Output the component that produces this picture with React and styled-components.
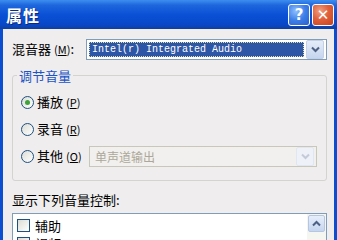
import React from "react";
import styled, { createGlobalStyle } from "styled-components";

const GlobalStyle = createGlobalStyle`
  html, body {
    margin: 0;
    padding: 0;
    background: #ecebeb;
    overflow: hidden;
  }
  body {
    font-family: "Noto Sans CJK SC", "DejaVu Sans", sans-serif;
  }
`;

const Window = styled.div`
  width: 337px;
  height: 240px;
  display: flex;
  flex-direction: column;
  background: #0b4fd0;
  overflow: hidden;
`;

const TitleBar = styled.div`
  height: 29px;
  flex: none;
  display: flex;
  align-items: center;
  padding: 0 3px 0 6px;
  background: linear-gradient(180deg, #3d8ef0 0%, #1e66dc 18%, #0a51d6 50%, #0848c8 85%, #0f3f9e 100%);
`;

const Title = styled.div`
  flex: 1;
  color: #fff;
  font-size: 16px;
  font-weight: bold;
  letter-spacing: 1px;
  text-shadow: 1px 1px 0 #0a2a7a;
`;

const CapButton = styled.div`
  width: 20px;
  height: 20px;
  margin-left: 2px;
  border: 1px solid #fff;
  border-radius: 3px;
  display: flex;
  align-items: center;
  justify-content: center;
  color: #fff;
  font-family: "DejaVu Sans", sans-serif;
  font-weight: bold;
  font-size: 15px;
  background: ${p =>
    p.close
      ? "radial-gradient(circle at 35% 30%, #f0a080 0%, #e0603c 45%, #c8401e 100%)"
      : "radial-gradient(circle at 35% 30%, #8fc0ff 0%, #3d7ee8 50%, #2a5fce 100%)"};
`;

const Body = styled.div`
  flex: 1;
  margin: 0 3px;
  background: #efeded;
  padding: 9px 7px 0 9px;
  display: flex;
  flex-direction: column;
`;

const Row = styled.div`
  display: flex;
  align-items: center;
  height: 22px;
`;

const Label = styled.div`
  font-size: 13px;
  color: #000;
  width: ${p => p.w || "auto"};
  flex: none;
  line-height: 16px;
  white-space: nowrap;
`;

const Mnemonic = styled.span`
  font-size: 11px;
  margin-left: 3px;
  letter-spacing: 0;
  u {
    text-decoration: underline;
  }
`;

const Combo = styled.div`
  flex: 1;
  height: 21px;
  box-sizing: border-box;
  border: 1px solid ${p => (p.disabled ? "#c9c7ba" : "#7f9db9")};
  background: ${p => (p.disabled ? "#f2f0ee" : "#fff")};
  display: flex;
  align-items: center;
  padding: 2px;
`;

const ComboText = styled.div`
  flex: 1;
  height: 100%;
  display: flex;
  align-items: center;
  padding-left: 3px;
  font-family: ${p => (p.mono ? '"Liberation Mono", monospace' : '"Noto Sans CJK SC", sans-serif')};
  font-size: ${p => (p.mono ? "10px" : "12px")};
  color: ${p => (p.disabled ? "#aca899" : "#fff")};
  background: ${p => (p.disabled ? "transparent" : "#2d56a6")};
  outline: ${p => (p.disabled ? "none" : "1px dotted #e0e0a0")};
  outline-offset: -1px;
`;

const DropButton = styled.div`
  width: 16px;
  height: 17px;
  margin-left: 2px;
  border-radius: 2px;
  border: 1px solid ${p => (p.disabled ? "#e1e6f0" : "#c3d0e6")};
  background: ${p => (p.disabled ? "#eef1f7" : "linear-gradient(180deg, #e4ecf8, #c6d6ef)")};
  display: flex;
  align-items: center;
  justify-content: center;
`;

const Group = styled.fieldset`
  margin: 6px 0 0 0;
  padding: 6px 0 0 0;
  border: 1px solid #d5d3d0;
  border-radius: 3px;
  height: 115px;
  box-sizing: border-box;
  display: flex;
  flex-direction: column;
  gap: 5px;
`;

const Legend = styled.legend`
  font-size: 13px;
  color: #2152c6;
  padding: 0 2px;
  margin-left: 4px;
`;

const RadioRow = styled.div`
  display: flex;
  align-items: center;
  height: 22px;
  padding-left: 8px;
  padding-right: 9px;
`;

const Radio = styled.div`
  width: 11px;
  height: 11px;
  border-radius: 50%;
  border: 1px solid #1c5180;
  background: linear-gradient(135deg, #dcdcd6, #fff);
  display: flex;
  align-items: center;
  justify-content: center;
  margin-right: 3px;
  flex: none;
  &::after {
    content: "";
    display: ${p => (p.checked ? "block" : "none")};
    width: 5px;
    height: 5px;
    border-radius: 50%;
    background: #3ea33a;
  }
`;

const ListLabel = styled.div`
  font-size: 13px;
  margin-top: 10px;
  line-height: 18px;
`;

const ListBox = styled.div`
  margin-top: 4px;
  flex: 1;
  border: 1px solid #7f9db9;
  background: #fff;
  display: flex;
`;

const ListItems = styled.div`
  flex: 1;
  padding-top: 2px;
`;

const CheckRow = styled.div`
  display: flex;
  align-items: center;
  height: 18px;
  padding-left: 4px;
  font-size: 13px;
`;

const Check = styled.div`
  width: 11px;
  height: 11px;
  border: 1px solid #1c5180;
  background: linear-gradient(135deg, #dcdcd6, #fff);
  margin-right: 5px;
`;

const ScrollTrack = styled.div`
  width: 17px;
  background: #f5f5f1;
  padding: 1px;
`;

const ScrollBtn = styled.div`
  width: 15px;
  height: 15px;
  border: 1px solid #b5c6e4;
  border-radius: 2px;
  background: linear-gradient(180deg, #e6eefb, #c6d6ef);
  display: flex;
  align-items: center;
  justify-content: center;
`;

function Chevron({ up, color = "#4d6185" }) {
  return (
    <svg width="9" height="7" viewBox="0 0 9 7">
      <path
        d={up ? "M1 5.5 L4.5 2 L8 5.5" : "M1 1.5 L4.5 5 L8 1.5"}
        fill="none"
        stroke={color}
        strokeWidth="2"
      />
    </svg>
  );
}

function Key({ k }) {
  return (
    <Mnemonic>
      (<u>{k}</u>)
    </Mnemonic>
  );
}

export default function App() {
  return (
    <Window>
      <GlobalStyle />
      <TitleBar>
        <Title>属性</Title>
        <CapButton>?</CapButton>
        <CapButton close>✕</CapButton>
      </TitleBar>
      <Body>
        <Row>
          <Label w="74px">
            混音器<Key k="M" />:
          </Label>
          <Combo>
            <ComboText mono>Intel(r) Integrated Audio</ComboText>
            <DropButton>
              <Chevron />
            </DropButton>
          </Combo>
        </Row>
        <Group>
          <Legend>调节音量</Legend>
          <RadioRow>
            <Radio checked />
            <Label>
              播放<Key k="P" />
            </Label>
          </RadioRow>
          <RadioRow>
            <Radio />
            <Label>
              录音<Key k="R" />
            </Label>
          </RadioRow>
          <RadioRow>
            <Radio />
            <Label w="52px">
              其他<Key k="O" />
            </Label>
            <Combo disabled>
              <ComboText disabled>单声道输出</ComboText>
              <DropButton disabled>
                <Chevron color="#c4cbd8" />
              </DropButton>
            </Combo>
          </RadioRow>
        </Group>
        <ListLabel>显示下列音量控制:</ListLabel>
        <ListBox>
          <ListItems>
            <CheckRow>
              <Check />
              辅助
            </CheckRow>
            <CheckRow>
              <Check />
              视频
            </CheckRow>
          </ListItems>
          <ScrollTrack>
            <ScrollBtn>
              <Chevron up />
            </ScrollBtn>
          </ScrollTrack>
        </ListBox>
      </Body>
    </Window>
  );
}
